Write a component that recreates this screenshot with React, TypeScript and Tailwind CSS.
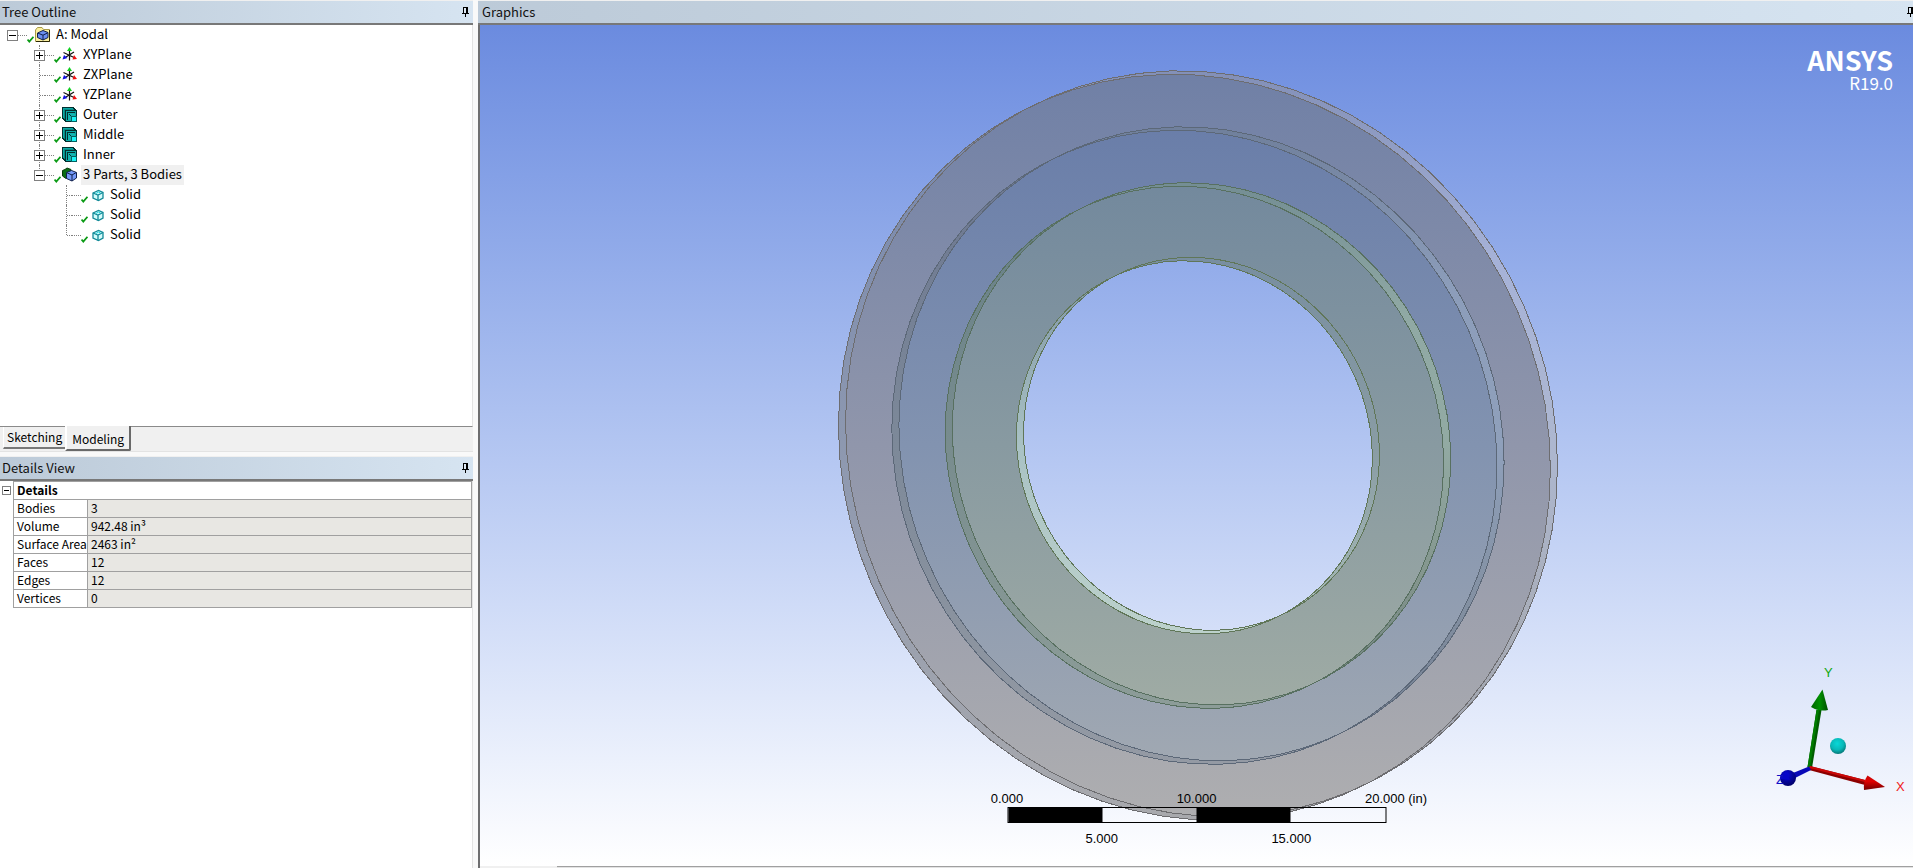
import { useId, type ReactNode } from "react";
import clsx from "clsx";

type TreeItem = {
  label: string;
  icon: "project" | "plane" | "body" | "parts" | "solid";
  expander?: "+" | "-";
  selected?: boolean;
  children?: TreeItem[];
};

const tree: TreeItem = {
  label: "A: Modal",
  icon: "project",
  expander: "-",
  children: [
    { label: "XYPlane", icon: "plane", expander: "+" },
    { label: "ZXPlane", icon: "plane" },
    { label: "YZPlane", icon: "plane" },
    { label: "Outer", icon: "body", expander: "+" },
    { label: "Middle", icon: "body", expander: "+" },
    { label: "Inner", icon: "body", expander: "+" },
    {
      label: "3 Parts, 3 Bodies",
      icon: "parts",
      expander: "-",
      selected: true,
      children: [
        { label: "Solid", icon: "solid" },
        { label: "Solid", icon: "solid" },
        { label: "Solid", icon: "solid" },
      ],
    },
  ],
};

const details = [
  ["Bodies", "3"],
  ["Volume", "942.48 in³"],
  ["Surface Area", "2463 in²"],
  ["Faces", "12"],
  ["Edges", "12"],
  ["Vertices", "0"],
];

function PinIcon() {
  return (
    <svg width="9" height="10" viewBox="0 0 9 10" shapeRendering="crispEdges" className="shrink-0">
      <path d="M2 0h5v6h-5z" fill="#000" />
      <path d="M3 1h2v5h-2z" fill="#dce8f3" />
      <path d="M1 6h7v1h-7zM4 7h1v3h-1z" fill="#000" />
    </svg>
  );
}

function PanelHeader({ title, className }: { title: string; className?: string }) {
  return (
    <header
      className={clsx(
        "flex h-[25px] shrink-0 items-center justify-between border-t border-b-2 border-t-[#f0f0f0] border-b-[#787878] bg-linear-to-r from-[#bccad8] to-[#d6e4f1] pl-[2px]",
        className,
      )}
    >
      <h2 className="text-[13px] leading-5 text-[#111]">{title}</h2>
      <button aria-label={"Pin " + title} className="flex">
        <PinIcon />
      </button>
    </header>
  );
}

function CheckMark() {
  return (
    <svg width="7" height="7" viewBox="0 0 7 7" className="mt-[9px] shrink-0">
      <path d="M0.5 3.5L2.3 5.6L6.5 0.8" fill="none" stroke="#0a9a14" strokeWidth="1.8" />
    </svg>
  );
}

function NodeIcon({ kind }: { kind: TreeItem["icon"] }) {
  return (
    <svg width="16" height="16" viewBox="0 0 16 16" className="ml-px shrink-0">
      {kind === "project" && (
        <>
          <path d="M0.5 14.5V3L2.5 0.5H7L8.5 2.5H14.5V14.5z" fill="#fbf0a0" stroke="#a89b48" />
          <path d="M14.5 3V14.5H1" fill="none" stroke="#2b2705" />
          <path d="M2.5 6L8 3.5L13 5.5V10.5L8 13L2.5 10.5z" fill="#6c8ff0" stroke="#10204c" />
          <path d="M3 6.2L8 8.2L12.8 5.8M8 8.2V13" fill="none" stroke="#10204c" />
        </>
      )}
      {kind === "plane" && (
        <>
          <path d="M7.5 3V13.5M1.5 5.5L12 10.5M12 5L4 10" fill="none" stroke="#111" strokeWidth="1.2" />
          <path d="M7.500 0L10 4H5z" fill="#10d020" />
          <path d="M15 12L10.5 12.5L12 8z" fill="#f01010" />
          <path d="M0.5 12.5L2 8L5.5 11z" fill="#1010e0" />
        </>
      )}
      {kind === "body" && (
        <g shapeRendering="crispEdges">
          <path d="M0 0h12v1h1v1h1v1h1v12h-12v-1h-1v-1h-1v-1h-1z" fill="#022f2f" />
          <path d="M1 1h10v1h-9v9h-1z" fill="#0aa8a4" />
          <path d="M2 2h10v1h-9v9h-1z" fill="#078884" />
          <path d="M4 4h10v10h-10z" fill="#0aa8a4" />
          <path d="M5 5h8v1h-7v7h-1z" fill="#022f2f" />
          <path d="M6 6h6v1h1v2h-4v4h-3z" fill="#10b4b0" />
          <path d="M7 7h1v1h1v1h1v1h-1v-1h-1v-1h-1z" fill="#022f2f" />
          <path d="M9 9h6v6h-6z" fill="#046060" />
          <path d="M10 10h4v4h-4z" fill="#18f4f4" />
        </g>
      )}
      {kind === "parts" && (
        <>
          <path d="M0.5 3.5L3 2.500L5 1L9 2.5V9L4 11.5L0.5 9z" fill="#0a6d14" stroke="#043a08" />
          <path d="M4.5 5.5L9.5 3.5L14.5 5.5V11L10 14L4.5 11.500z" fill="#7498f8" stroke="#10204c" />
          <path d="M5 5.8L10 8L14.2 5.500M10 8V14" fill="none" stroke="#10204c" />
        </>
      )}
      {kind === "solid" && (
        <>
          <path
            d="M4 6L9.5 3.5L14 5.5V11L9.5 13.5L4 11z"
            fill="#d4fbfb"
            stroke="#128a98"
            strokeWidth="1.3"
          />
          <path d="M4 6L9 8L14 5.5M9 8V13.5" fill="none" stroke="#128a98" strokeWidth="1.3" />
          <path d="M7 6.5L9.5 5L11.5 6" fill="none" stroke="#20d8e0" />
        </>
      )}
    </svg>
  );
}

function TreeNode({ item, root, last }: { item: TreeItem; root?: boolean; last?: boolean }) {
  return (
    <li>
      <div className="relative flex h-5 items-center">
        {!root && (
          <span
            className={clsx(
              "absolute top-0 left-[5px] border-l border-dotted border-[#808080]",
              last ? "h-[10px]" : "h-5",
            )}
          />
        )}
        {item.expander ? (
          <button
            aria-label={(item.expander === "+" ? "Expand " : "Collapse ") + item.label}
            className="relative flex size-[11px] shrink-0 items-center justify-center border border-[#808080] bg-white"
          >
            <span className="absolute h-px w-[7px] bg-black" />
            {item.expander === "+" && <span className="absolute h-[7px] w-px bg-black" />}
          </button>
        ) : (
          <span className="ml-[6px] w-[5px] shrink-0 border-t border-dotted border-[#808080]" />
        )}
        <span className="w-[9px] shrink-0 border-t border-dotted border-[#808080]" />
        <CheckMark />
        <NodeIcon kind={item.icon} />
        <span
          className={clsx(
            "ml-[3px] px-[2px] pb-[2px] text-[13px] leading-[18px] whitespace-nowrap",
            item.selected && "bg-[#f0f0f0]",
          )}
        >
          {item.label}
        </span>
      </div>
      {item.children && (
        <ul className="pl-[27px]">
          {item.children.map((child, i) => (
            <TreeNode key={i} item={child} last={i === item.children!.length - 1} />
          ))}
        </ul>
      )}
    </li>
  );
}

function TreeOutline() {
  return (
    <section className="flex h-[427px] shrink-0 flex-col">
      <PanelHeader title="Tree Outline" className="pr-[3px]" />
      <ul className="flex-1 border-r border-b border-r-[#e3e3e3] border-b-[#8a8a8a] bg-white pl-[7px]">
        <TreeNode item={tree} root />
      </ul>
    </section>
  );
}

function ModeTabs() {
  return (
    <div role="tablist" className="flex h-[25px] shrink-0 items-start border-b border-[#e3e3e3] bg-[#f0f0f0] pl-[3px]">
      <button
        role="tab"
        aria-selected="false"
        className="h-[22px] border-b-2 border-l border-b-[#787878] border-l-white px-[3px] text-[12px] leading-5"
      >
        Sketching
      </button>
      <button
        role="tab"
        aria-selected="true"
        className="-mt-px h-[25px] rounded-br-xs border-r-2 border-b-2 border-l-2 border-r-[#696969] border-b-[#696969] border-l-white bg-[#f0f0f0] px-[5px] pt-[3px] text-[12px] leading-5"
      >
        Modeling
      </button>
    </div>
  );
}

function DetailsView() {
  return (
    <section className="mt-[4px] flex flex-1 flex-col">
      <PanelHeader title="Details View" className="pr-[3px]" />
      <div className="flex flex-1 items-start border-r border-[#e3e3e3] bg-white pl-[2px]">
        <button
          aria-label="Collapse details"
          className="mt-[5px] mr-[2px] flex size-[9px] shrink-0 items-center justify-center border border-[#808080]"
        >
          <span className="h-px w-[5px] bg-black" />
        </button>
        <table className="w-full table-fixed border-collapse text-left text-[12px] leading-[15px]">
          <colgroup>
            <col className="w-[74px]" />
            <col />
          </colgroup>
          <thead>
            <tr>
              <th colSpan={2} className="h-[18px] border border-[#a0a0a0] px-[3px] pt-0 pb-[2px] font-bold">
                Details
              </th>
            </tr>
          </thead>
          <tbody>
            {details.map(([name, value]) => (
              <tr key={name}>
                <th
                  scope="row"
                  className="h-[18px] border border-[#a0a0a0] pt-0 pr-0 pb-[2px] pl-[3px] font-normal whitespace-nowrap"
                >
                  {name}
                </th>
                <td className="h-[18px] border border-[#a0a0a0] bg-[#e8e7e3] px-[3px] pt-0 pb-[2px]">
                  {value}
                </td>
              </tr>
            ))}
          </tbody>
        </table>
      </div>
    </section>
  );
}

// A circle of the model seen slightly from the side, as the faceted outline the viewer draws.
function outline(cx: number, cy: number, radius: number) {
  const segments = 72;
  const points: string[] = [];
  for (let i = 0; i < segments; i++) {
    const t = (i / segments) * Math.PI * 2;
    const x = cx + radius * 35.6 * Math.cos(t);
    const y = cy + radius * 37.3 * Math.sin(t + 0.059);
    points.push(x.toFixed(1) + "," + y.toFixed(1));
  }
  return points.join(" ");
}

const back = (radius: number) => outline(714.4, 422.3, radius);
const front = (radius: number) => outline(721.5, 418.8, radius);

const rings = [
  {
    name: "outer",
    radius: 10,
    stroke: "#6d6d70",
    face: ["#7080a6", "#9096ab", "#aeaeb0"],
    left: ["#7485ac", "#8d98b0", "#a8a9ad"],
    right: ["#8390b8", "#a6b2d8", "#adb7d0", "#a8adb8", "#9a9ea8"],
  },
  {
    name: "middle",
    radius: 8.5,
    stroke: "#5c6878",
    face: ["#6a7ea9", "#8293b0", "#a0a8b2"],
    left: ["#6a7590", "#7d8999", "#949aa4"],
    right: ["#70809c", "#8c9dba", "#8fa0bb", "#8390a2", "#6f7a8c"],
  },
  {
    name: "inner",
    radius: 7,
    stroke: "#587060",
    face: ["#73899d", "#889aa1", "#9faba4"],
    left: ["#667f88", "#788c8e", "#8c9c98"],
    right: ["#748e94", "#90a9a4", "#92aaa3", "#84968e", "#6e8080"],
  },
];

function Stops({ id, colors, y1, y2 }: { id: string; colors: string[]; y1: number; y2: number }) {
  return (
    <linearGradient id={id} gradientUnits="userSpaceOnUse" x1="0" x2="0" y1={y1} y2={y2}>
      {colors.map((color, i) => (
        <stop key={i} offset={i / (colors.length - 1)} stopColor={color} />
      ))}
    </linearGradient>
  );
}

function RingModel() {
  const id = useId();
  return (
    <svg
      role="img"
      aria-label="Ring model"
      viewBox="0 0 1433 841"
      className="absolute inset-0 h-full w-full"
    >
      <defs>
        {rings.map((r) => {
          const y1 = 420 - r.radius * 37;
          const y2 = 420 + r.radius * 37;
          return (
            <g key={r.name}>
              <clipPath id={id + r.name}>
                <polygon points={back(r.radius)} />
              </clipPath>
              <Stops id={id + r.name + "face"} colors={r.face} y1={y1} y2={y2} />
              <Stops id={id + r.name + "left"} colors={r.left} y1={y1} y2={y2} />
              <Stops id={id + r.name + "right"} colors={r.right} y1={y1} y2={y2} />
            </g>
          );
        })}
        <Stops id={id + "bore"} colors={["#7c92a4", "#a9c2c4", "#bcd1cb"]} y1={235} y2={608} />
        <Stops id={id + "lip"} colors={["#788ea0", "#899ca4", "#a9bdb8"]} y1={235} y2={608} />
        <clipPath id={id + "hole"}>
          <polygon points={back(5)} />
        </clipPath>
        <mask id={id + "open"} maskUnits="userSpaceOnUse" x="0" y="0" width="1433" height="841">
          <rect width="1433" height="841" fill="#fff" />
          <polygon points={front(5)} clipPath={"url(#" + id + "hole)"} fill="#000" />
        </mask>
      </defs>
      <g mask={"url(#" + id + "open)"}>
        {rings.map((r) => (
          <g key={r.name}>
            <polygon points={back(r.radius)} fill={"url(#" + id + r.name + "left)"} />
            <polygon points={front(r.radius)} fill={"url(#" + id + r.name + "right)"} />
            <polygon
              points={front(r.radius)}
              clipPath={"url(#" + id + r.name + ")"}
              fill={"url(#" + id + r.name + "face)"}
            />
          </g>
        ))}
        <polygon points={back(5)} fill={"url(#" + id + "bore)"} />
        <polygon points={front(5)} fill={"url(#" + id + "lip)"} />
      </g>
      <g fill="none" shapeRendering="crispEdges">
        {rings.map((r) => (
          <g key={r.name} stroke={r.stroke}>
            <polygon points={back(r.radius)} />
            <polygon points={front(r.radius)} />
          </g>
        ))}
        <polygon points={back(5)} stroke="#607658" />
        <polygon points={front(5)} stroke="#607658" />
      </g>
    </svg>
  );
}

function ScaleLabel({ children }: { children: ReactNode }) {
  return <span className="flex w-0 justify-center whitespace-nowrap">{children}</span>;
}

function ScaleBar() {
  return (
    <div className="absolute bottom-[19px] left-1/2 w-[379px] -translate-x-1/2 font-['Liberation_Sans',Arial,sans-serif] text-[13px] leading-4 text-black">
      <div className="flex justify-between">
        <ScaleLabel>0.000</ScaleLabel>
        <ScaleLabel>10.000</ScaleLabel>
        <span className="flex w-0 justify-center">
          <span className="ml-5 whitespace-nowrap">20.000 (in)</span>
        </span>
      </div>
      <div className="grid h-4 grid-cols-4 border border-black">
        <span className="bg-black" />
        <span />
        <span className="bg-black" />
        <span />
      </div>
      <div className="mt-2 flex justify-around">
        <ScaleLabel>5.000</ScaleLabel>
        <ScaleLabel>15.000</ScaleLabel>
      </div>
    </div>
  );
}

function AxisTriad() {
  return (
    <svg
      role="img"
      aria-label="Axis triad"
      width="140"
      height="140"
      viewBox="0 0 140 140"
      className="absolute right-0 bottom-[66px] font-['Liberation_Sans',Arial,sans-serif] text-[13px]"
    >
      <defs>
        <linearGradient id="axis-x" x1="0" y1="0" x2="0" y2="1">
          <stop offset="0" stopColor="#c80808" />
          <stop offset="0.4" stopColor="#e00000" />
          <stop offset="1" stopColor="#700000" />
        </linearGradient>
        <linearGradient id="axis-y" x1="0" y1="0" x2="1" y2="0">
          <stop offset="0" stopColor="#006400" />
          <stop offset="0.5" stopColor="#009000" />
          <stop offset="1" stopColor="#005000" />
        </linearGradient>
        <radialGradient id="axis-z" cx="0.4" cy="0.3" r="0.7">
          <stop offset="0" stopColor="#0808e0" />
          <stop offset="1" stopColor="#00006a" />
        </radialGradient>
        <radialGradient id="iso-ball" cx="0.45" cy="0.35" r="0.65">
          <stop offset="0" stopColor="#08d8d8" />
          <stop offset="0.6" stopColor="#08b8b8" />
          <stop offset="1" stopColor="#067878" />
        </radialGradient>
      </defs>
      <path d="M43.5 50L48.5 50L39 108L34.5 107z" fill="#005c00" />
      <path d="M43.5 50L46 50L37 108L34.5 107z" fill="#007c00" />
      <path d="M49.5 29.5L55 50Q46 52 38 47z" fill="url(#axis-y)" />
      <path d="M37 106L92 120V125L36 110z" fill="#8c0000" />
      <path d="M37 106L92 120V122L36 108z" fill="#cc0808" />
      <path d="M94.5 115.5L112 127L91 130Q90 122 94.5 115.5z" fill="url(#axis-x)" />
      <path d="M36 106.5L20 113L22 118L38 110z" fill="#0808b8" />
      <circle cx="15" cy="118" r="8" fill="url(#axis-z)" />
      <path d="M7 119L14 113L17 120z" fill="#0606c8" />
      <circle cx="65" cy="86" r="8" fill="url(#iso-ball)" />
      <text x="51" y="17" fill="#10a810">
        Y
      </text>
      <text x="123" y="131" fill="#f01818">
        X
      </text>
      <text x="3" y="124" fill="#1010c8">
        Z
      </text>
    </svg>
  );
}

function GraphicsView() {
  return (
    <main className="ml-[5px] flex min-w-0 flex-1 flex-col overflow-hidden">
      <PanelHeader title="Graphics" className="-mr-[2px] pl-[4px]" />
      <div className="relative flex-1 overflow-hidden border-l-2 border-[#6e6e70] bg-linear-to-b from-[#6b8bdf] to-white">
        <RingModel />
        <div className="absolute top-[22px] right-[20px] text-right text-white">
          <div className="text-[27px] leading-[26px] font-bold">ANSYS</div>
          <div className="text-[17px] leading-5">R19.0</div>
        </div>
        <ScaleBar />
        <AxisTriad />
      </div>
      <div className="flex h-[2px] shrink-0">
        <span className="w-[79px] border-l-2 border-[#6e6e70] bg-[#f0f0f0]" />
        <span className="flex-1 border-t border-[#a0a0a0] bg-[#e3e3e3]" />
      </div>
    </main>
  );
}

export default function App() {
  return (
    <div className="flex h-screen min-h-[640px] bg-[#f9f9f9] font-['Noto_Sans_CJK_SC',sans-serif] text-black">
      <aside className="flex w-[473px] shrink-0 flex-col">
        <TreeOutline />
        <ModeTabs />
        <DetailsView />
      </aside>
      <GraphicsView />
    </div>
  );
}
